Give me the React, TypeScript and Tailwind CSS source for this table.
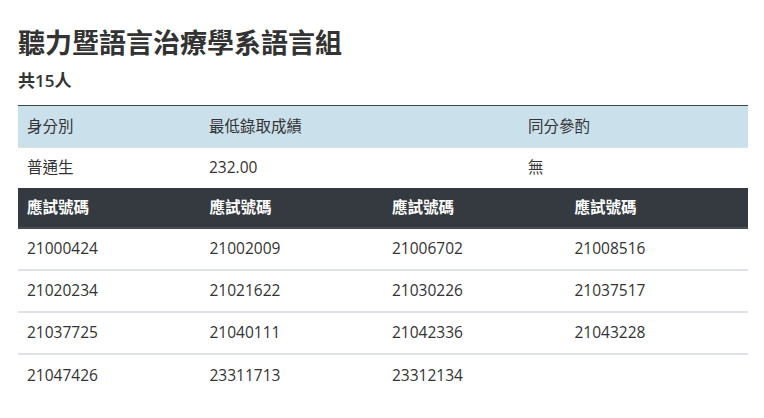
import React from "react";

const ids = [
  ["21000424", "21002009", "21006702", "21008516"],
  ["21020234", "21021622", "21030226", "21037517"],
  ["21037725", "21040111", "21042336", "21043228"],
  ["21047426", "23311713", "23312134", ""],
];

export default function App() {
  return (
    <div
      className="w-[764px] h-[418px] bg-white px-[18px] pt-[27px] text-[#333333] overflow-hidden"
      style={{ fontFamily: '"Open Sans", "Noto Sans CJK TC", sans-serif' }}
    >
      <h1 className="text-[27px] leading-[31px] font-bold text-[#333333]">聽力暨語言治療學系語言組</h1>
      <div className="mt-[11px] text-[17px] leading-[24px] font-semibold text-[#333333]">共15人</div>
      <div className="mt-[12px] w-[730px] border-t border-[#3f454b]">
        <div className="flex h-[41px] items-center bg-[#cae0eb] text-[15.5px] text-[#333333]">
          <div className="w-[182px] pl-[9px]">身分別</div>
          <div className="w-[319px] pl-[9px]">最低錄取成績</div>
          <div className="flex-1 pl-[9px]">同分參酌</div>
        </div>
        <div className="flex h-[41px] items-center border-t border-[#dee2e6] text-[15.5px] text-[#333333]">
          <div className="w-[182px] pl-[9px]">普通生</div>
          <div className="w-[319px] pl-[9px]">232.00</div>
          <div className="flex-1 pl-[9px]">無</div>
        </div>
        <div className="grid grid-cols-4 h-[41px] items-center bg-[#343a40] border-b-2 border-[#454d55] text-[15.5px] font-bold text-white">
          <div className="pl-[9px]">應試號碼</div>
          <div className="pl-[9px]">應試號碼</div>
          <div className="pl-[9px]">應試號碼</div>
          <div className="pl-[9px]">應試號碼</div>
        </div>
        {ids.map((row, i) => (
          <div
            key={i}
            className={
              i < ids.length - 1
                ? "grid grid-cols-4 h-[42px] items-center border-b-2 border-[#dee2e6] text-[15.5px] text-[#333333]"
                : "grid grid-cols-4 h-[42px] items-center text-[15.5px] text-[#333333]"
            }
          >
            {row.map((v, j) => (
              <div key={j} className="pl-[9px]">
                {v}
              </div>
            ))}
          </div>
        ))}
      </div>
    </div>
  );
}
